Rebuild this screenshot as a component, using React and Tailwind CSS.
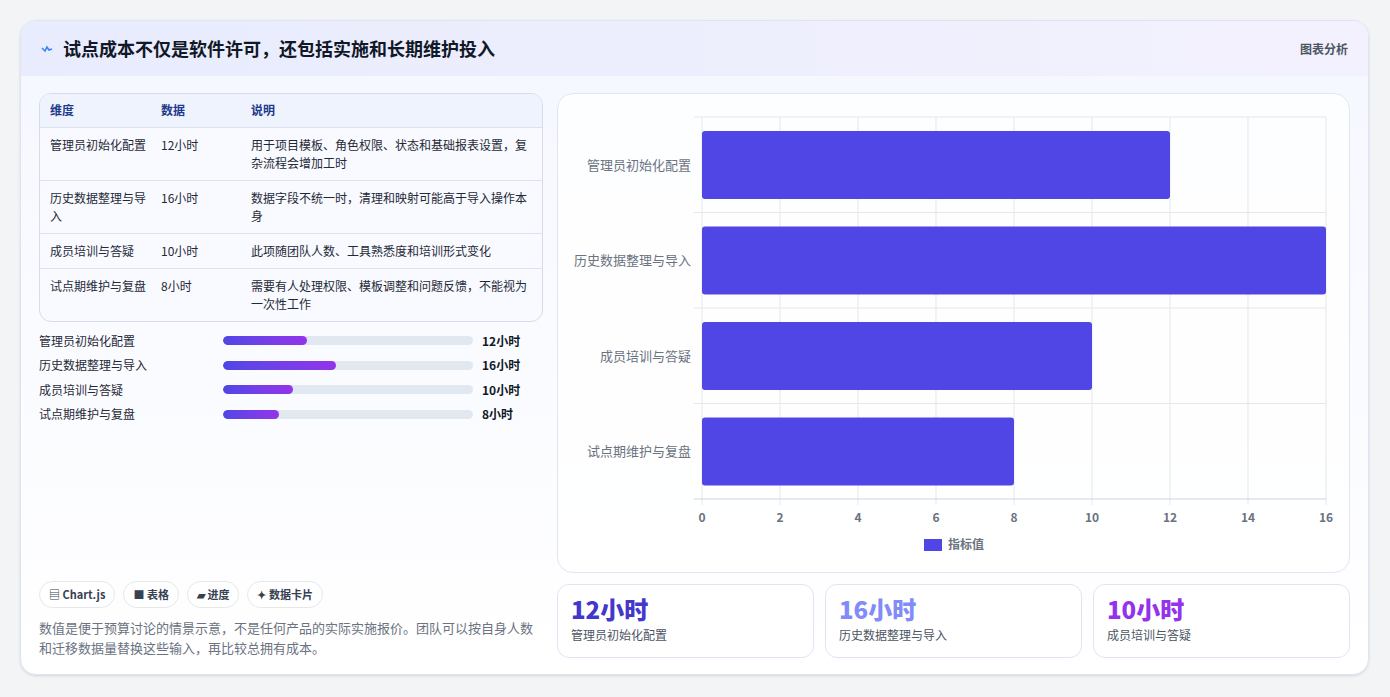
const F = { fontFamily: '"Noto Sans CJK SC","Noto Sans",sans-serif' };
const rows = [
  ["管理员初始化配置", "12小时", "用于项目模板、角色权限、状态和基础报表设置，复杂流程会增加工时"],
  ["历史数据整理与导入", "16小时", "数据字段不统一时，清理和映射可能高于导入操作本身"],
  ["成员培训与答疑", "10小时", "此项随团队人数、工具熟悉度和培训形式变化"],
  ["试点期维护与复盘", "8小时", "需要有人处理权限、模板调整和问题反馈，不能视为一次性工作"],
];
const vals = [12, 16, 10, 8];

function Chart() {
  const x0 = 144, x1 = 768, y0 = 23, y1 = 405, u = (x1 - x0) / 16, band = (y1 - y0) / 4;
  return (
    <svg width="791" height="480" style={F}>
      {[0, 1, 2, 3, 4, 5, 6, 7, 8].map(i => (
        <line key={i} x1={x0 + i * 2 * u} x2={x0 + i * 2 * u} y1={y0} y2={y1 + 6} stroke="#e5e7eb" />
      ))}
      {[0, 1, 2, 3, 4].map(i => (
        <line key={i} x1={x0 - 8} x2={x1} y1={y0 + i * band} y2={y0 + i * band} stroke={i === 4 ? "#cbd5e1" : "#e5e7eb"} />
      ))}
      {rows.map((r, i) => (
        <g key={i}>
          <rect x={x0} y={y0 + i * band + 14} width={vals[i] * u} height={68} rx="3" fill="#4f46e5" />
          <text x={x0 - 11} y={y0 + i * band + band / 2 + 5} textAnchor="end" fontSize="13" fill="#6b7280">{r[0]}</text>
        </g>
      ))}
      {[0, 2, 4, 6, 8, 10, 12, 14, 16].map((t, i) => (
        <text key={t} x={x0 + i * 2 * u} y={428} textAnchor="middle" fontSize="12" fontWeight="700" fill="#6b7280">{t}</text>
      ))}
      <rect x="366" y="445" width="18" height="12" fill="#4f46e5" />
      <text x="390" y="455" fontSize="12" fontWeight="700" fill="#6b7280">指标值</text>
    </svg>
  );
}

export default function App() {
  return (
    <div className="w-[1390px] h-[697px] bg-[#f3f4f6] pt-[20px] pl-[20px]" style={F}>
      <div className="w-[1349px] h-[655px] rounded-2xl bg-gradient-to-b from-[#f5f7ff] to-white border border-[#dfe3f5] overflow-hidden shadow-sm flex flex-col">
        <div className="h-[55px] shrink-0 flex items-center justify-between px-[20px] bg-gradient-to-r from-[#e8ecfd] to-[#f3f1fd]">
          <div className="flex items-center gap-[10px]">
            <svg width="12" height="10" viewBox="0 0 12 10"><path d="M1 4 L4 7 L6 3 L8 6 L11 5" stroke="#3b82f6" strokeWidth="1.6" fill="none" /></svg>
            <span className="text-[18px] font-bold text-[#111827]">试点成本不仅是软件许可，还包括实施和长期维护投入</span>
          </div>
          <span className="text-[12px] font-semibold text-[#4b5563]">图表分析</span>
        </div>
        <div className="flex-1 flex gap-[14px] px-[18px] pt-[17px] pb-[18px]">
          <div className="w-[506px] flex flex-col">
            <div className="rounded-xl border border-[#d5dceb] overflow-hidden bg-[#f8faff]">
              <table className="w-full text-[12px] text-[#1f2937]">
                <thead>
                  <tr className="bg-[#eef3fd] text-[#1e3a8a] font-bold h-[33px] text-left">
                    <th className="pl-[10px] w-[121px] font-bold">维度</th>
                    <th className="w-[90px] font-bold">数据</th>
                    <th className="font-bold">说明</th>
                  </tr>
                </thead>
                <tbody>
                  {rows.map((r, i) => (
                    <tr key={i} className="border-t border-[#dde3ee] align-top">
                      <td className="pl-[10px] pr-[8px] py-[8px] leading-[18px]">{r[0]}</td>
                      <td className="py-[8px] leading-[18px]">{r[1]}</td>
                      <td className="py-[8px] pr-[14px] leading-[18px]">{r[2]}</td>
                    </tr>
                  ))}
                </tbody>
              </table>
            </div>
            <div className="mt-[10px] flex flex-col gap-[6px]">
              {rows.map((r, i) => (
                <div key={i} className="flex items-center h-[18.5px] text-[12px]">
                  <span className="w-[184px] text-[#1f2937]">{r[0]}</span>
                  <div className="w-[250px] h-[9px] rounded-full bg-[#e2e8f0] overflow-hidden">
                    <div className="h-full rounded-full bg-gradient-to-r from-[#4f46e5] to-[#9333ea]" style={{ width: `${(vals[i] / 16) * 45}%` }} />
                  </div>
                  <span className="ml-[9px] font-bold text-[#111827]">{r[1]}</span>
                </div>
              ))}
            </div>
            <div className="mt-auto flex gap-[8px]">
              {["▤ Chart.js", "■ 表格", "▰ 进度", "✦ 数据卡片"].map(c => (
                <span key={c} className="h-[27px] px-[9px] flex items-center rounded-full border border-[#e5e7eb] bg-white/70 text-[11px] font-semibold text-[#374151]">{c}</span>
              ))}
            </div>
            <p className="mt-[10px] text-[13px] leading-[20px] text-[#6b7280]">数值是便于预算讨论的情景示意，不是任何产品的实际实施报价。团队可以按自身人数和迁移数据量替换这些输入，再比较总拥有成本。</p>
          </div>
          <div className="flex-1 flex flex-col gap-[11px]">
            <div className="h-[480px] rounded-2xl border border-[#e0e6f0] bg-white/80 overflow-hidden"><Chart /></div>
            <div className="flex gap-[11px]">
              {[["12小时", "管理员初始化配置", "text-[#4338ca]"], ["16小时", "历史数据整理与导入", "text-[#818cf8]"], ["10小时", "成员培训与答疑", "text-[#9333ea]"]].map(([v, l, c]) => (
                <div key={l} className="flex-1 h-[74px] rounded-xl border border-[#dde5f3] bg-white/80 px-[13px] pt-[9px]">
                  <div className={`text-[24px] font-extrabold leading-[30px] ${c}`}>{v}</div>
                  <div className="text-[12px] text-[#4b5563] mt-[2px]">{l}</div>
                </div>
              ))}
            </div>
          </div>
        </div>
      </div>
    </div>
  );
}
